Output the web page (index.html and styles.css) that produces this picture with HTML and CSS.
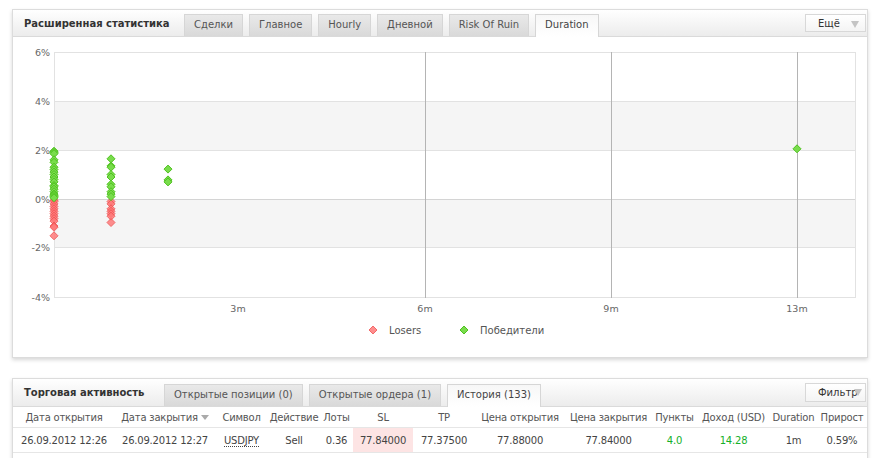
FILE: index.html
```html
<!DOCTYPE html>
<html lang="ru">
<head>
<meta charset="utf-8">
<title>Статистика</title>
<link rel="stylesheet" href="styles.css">
</head>
<body>
<section class="panel panel-stats">
  <header class="panel-head">
    <h2 class="panel-title title-stats">Расширенная статистика</h2>
    <nav class="tabs">
      <span class="tab">Сделки</span>
      <span class="tab">Главное</span>
      <span class="tab">Hourly</span>
      <span class="tab">Дневной</span>
      <span class="tab">Risk Of Ruin</span>
      <span class="tab active">Duration</span>
    </nav>
    <button class="menu-btn btn-more">Ещё<span class="tri"></span></button>
  </header>
  <svg class="chart" width="854" height="320" viewBox="13 37 854 320" xmlns="http://www.w3.org/2000/svg">
    <defs>
      <path id="dg" d="M0 -4 L4 0 L0 4 L-4 0Z" fill="#79dc4c" stroke="#4fc21f" stroke-width="1"/>
      <path id="dr" d="M0 -4 L4 0 L0 4 L-4 0Z" fill="#ff7a7a" stroke="#f05050" stroke-width="1" opacity="0.85"/>
    </defs>
    <rect x="54" y="101" width="801" height="49" fill="#f5f5f5"/>
    <rect x="54" y="199" width="801" height="48" fill="#f5f5f5"/>
    <g stroke="#e2e2e2" stroke-width="1" shape-rendering="crispEdges">
      <line x1="54" y1="52.5" x2="855" y2="52.5"/>
      <line x1="54" y1="101.5" x2="855" y2="101.5"/>
      <line x1="54" y1="150.5" x2="855" y2="150.5"/>
      <line x1="54" y1="247.5" x2="855" y2="247.5"/>
      <line x1="54" y1="297.5" x2="855" y2="297.5"/>
      <line x1="54.5" y1="52" x2="54.5" y2="298"/>
      <line x1="855.5" y1="52" x2="855.5" y2="298"/>
    </g>
    <line x1="54" y1="199.5" x2="855" y2="199.5" stroke="#d4d4d4" shape-rendering="crispEdges"/>
    <g stroke="#b4b4b4" stroke-width="1" shape-rendering="crispEdges">
      <line x1="425.5" y1="52" x2="425.5" y2="298"/>
      <line x1="611.5" y1="52" x2="611.5" y2="298"/>
      <line x1="797.5" y1="52" x2="797.5" y2="298"/>
    </g>
    <g class="axis-y" text-anchor="end">
      <text x="50" y="56">6%</text>
      <text x="50" y="105">4%</text>
      <text x="50" y="154">2%</text>
      <text x="50" y="203">0%</text>
      <text x="50" y="251">-2%</text>
      <text x="50" y="301">-4%</text>
    </g>
    <g class="axis-x" text-anchor="middle">
      <text x="238" y="312">3m</text>
      <text x="425" y="312">6m</text>
      <text x="611" y="312">9m</text>
      <text x="797" y="312">13m</text>
    </g>
    <g>
      <use href="#dr" x="54" y="200.2"/><use href="#dr" x="54" y="201.5"/><use href="#dr" x="54" y="203.9"/>
      <use href="#dr" x="54" y="206.4"/><use href="#dr" x="54" y="208.8"/><use href="#dr" x="54" y="211.3"/>
      <use href="#dr" x="54" y="213.7"/><use href="#dr" x="54" y="216.2"/><use href="#dr" x="54" y="218.6"/>
      <use href="#dr" x="54" y="221.1"/><use href="#dr" x="54" y="226"/><use href="#dr" x="54" y="227.2"/>
      <use href="#dr" x="54" y="235.8"/>
      <use href="#dr" x="111" y="201.5"/><use href="#dr" x="111" y="203.9"/><use href="#dr" x="111" y="208.8"/>
      <use href="#dr" x="111" y="211.3"/><use href="#dr" x="111" y="213.7"/><use href="#dr" x="111" y="216.2"/>
      <use href="#dr" x="111" y="222.5"/>
    </g>
    <g>
      <use href="#dg" x="54" y="151.2"/><use href="#dg" x="54" y="152.4"/><use href="#dg" x="54" y="153.7"/>
      <use href="#dg" x="54" y="159.8"/><use href="#dg" x="54" y="162.3"/><use href="#dg" x="54" y="167.2"/>
      <use href="#dg" x="54" y="169.6"/><use href="#dg" x="54" y="172.1"/><use href="#dg" x="54" y="174.5"/>
      <use href="#dg" x="54" y="177"/><use href="#dg" x="54" y="179.4"/><use href="#dg" x="54" y="181.9"/>
      <use href="#dg" x="54" y="185.5"/><use href="#dg" x="54" y="186.8"/><use href="#dg" x="54" y="189.2"/>
      <use href="#dg" x="54" y="191.7"/><use href="#dg" x="54" y="194.1"/><use href="#dg" x="54" y="195.3"/>
      <use href="#dg" x="54" y="196.6"/><use href="#dg" x="54" y="197.8"/>
      <use href="#dg" x="111" y="158.8"/><use href="#dg" x="111" y="165.9"/><use href="#dg" x="111" y="167.2"/>
      <use href="#dg" x="111" y="174.5"/><use href="#dg" x="111" y="177"/><use href="#dg" x="111" y="184.3"/>
      <use href="#dg" x="111" y="186.8"/><use href="#dg" x="111" y="191.7"/><use href="#dg" x="111" y="194.1"/>
      <use href="#dg" x="111" y="196.6"/>
      <use href="#dg" x="168" y="169.1"/><use href="#dg" x="168" y="179.9"/><use href="#dg" x="168" y="181.9"/>
      <use href="#dg" x="797" y="148.8"/>
    </g>
    <g class="legend">
      <use href="#dr" x="373" y="330"/>
      <text x="389" y="334">Losers</text>
      <use href="#dg" x="464" y="330"/>
      <text x="480" y="334">Победители</text>
    </g>
  </svg>
</section>

<section class="panel panel-trade">
  <header class="panel-head">
    <h2 class="panel-title title-trade">Торговая активность</h2>
    <nav class="tabs">
      <span class="tab">Открытые позиции (0)</span>
      <span class="tab">Открытые ордера (1)</span>
      <span class="tab active">История (133)</span>
    </nav>
    <button class="menu-btn btn-filter">Фильтр<span class="tri tri-over"></span></button>
  </header>
  <table class="trades">
    <colgroup>
      <col class="c1"><col class="c2"><col class="c3"><col class="c4"><col class="c5"><col class="c6"><col class="c7">
      <col class="c8"><col class="c9"><col class="c10"><col class="c11"><col class="c12"><col class="c13">
    </colgroup>
    <thead>
      <tr>
        <th>Дата открытия</th>
        <th>Дата закрытия <span class="sort"></span></th>
        <th>Символ</th>
        <th>Действие</th>
        <th>Лоты</th>
        <th>SL</th>
        <th>TP</th>
        <th>Цена открытия</th>
        <th>Цена закрытия</th>
        <th>Пункты</th>
        <th>Доход (USD)</th>
        <th>Duration</th>
        <th>Прирост</th>
      </tr>
    </thead>
    <tbody>
      <tr>
        <td>26.09.2012 12:26</td>
        <td>26.09.2012 12:27</td>
        <td><span class="sym">USDJPY</span></td>
        <td>Sell</td>
        <td>0.36</td>
        <td class="sl">77.84000</td>
        <td>77.37500</td>
        <td>77.88000</td>
        <td>77.84000</td>
        <td class="pos">4.0</td>
        <td class="pos">14.28</td>
        <td>1m</td>
        <td>0.59%</td>
      </tr>
      <tr class="empty"><td colspan="13"></td></tr>
    </tbody>
  </table>
</section>
</body>
</html>
```

FILE: styles.css
```css
html, body {
  margin: 0;
  padding: 0;
  background: #fff;
}
body {
  width: 878px;
  height: 458px;
  overflow: hidden;
  font-family: "DejaVu Sans", Verdana, sans-serif;
  font-size: 10px;
  color: #444;
}
.panel {
  width: 854px;
  margin-left: 12px;
  border: 1px solid #dcdcdc;
  background: #fff;
  box-shadow: 0 2px 4px rgba(0, 0, 0, 0.16);
}
.panel-stats {
  margin-top: 9px;
  height: 347px;
}
.panel-trade {
  margin-top: 20px;
  height: 120px;
}
.panel-head {
  display: flex;
  align-items: flex-end;
  height: 26px;
  background: linear-gradient(#ffffff, #ececec);
  border-bottom: 1px solid #dadada;
}
.panel-trade .panel-head {
  height: 27px;
}
.panel-title {
  margin: 0;
  align-self: center;
  box-sizing: border-box;
  padding-left: 11px;
  font-size: 10px;
  font-weight: bold;
  color: #333;
  white-space: nowrap;
}
.title-stats { width: 171px; }
.title-trade { width: 151px; }
.tabs {
  display: flex;
  align-items: flex-end;
  gap: 6px;
}
.tab {
  box-sizing: border-box;
  height: 22px;
  line-height: 20px;
  padding: 0 9px;
  border: 1px solid #d6d6d6;
  border-bottom: none;
  background: linear-gradient(#e9e9e9, #d9d9d9);
  color: #555;
  white-space: nowrap;
}
.tab.active {
  height: 23px;
  margin-bottom: -1px;
  background: linear-gradient(#f7f7f7, #ffffff);
  color: #444;
}
.menu-btn {
  position: relative;
  align-self: center;
  margin-left: auto;
  margin-right: 1px;
  box-sizing: border-box;
  width: 61px;
  border: 1px solid #d8d8d8;
  background: linear-gradient(#ffffff, #f4f4f4);
  font-family: inherit;
  font-size: 10px;
  color: #333;
  text-align: left;
  padding: 0;
}
.btn-more {
  height: 18px;
  padding-left: 12px;
}
.btn-filter {
  height: 19px;
  padding-left: 12px;
}
.tri {
  position: absolute;
  right: 6px;
  top: 6px;
  width: 0;
  height: 0;
  border-left: 4px solid transparent;
  border-right: 4px solid transparent;
  border-top: 7px solid #c4c4c4;
}
.tri-over {
  right: 3px;
  top: 5px;
}
.chart {
  display: block;
}
.axis-y text, .axis-x text {
  font-family: "DejaVu Sans", Verdana, sans-serif;
  font-size: 9.5px;
  fill: #666;
}
.legend text {
  font-family: "DejaVu Sans", Verdana, sans-serif;
  font-size: 10px;
  fill: #555;
}
.trades {
  width: 854px;
  table-layout: fixed;
  border-collapse: collapse;
  letter-spacing: -0.2px;
}
.c1 { width: 102px; }
.c2 { width: 100px; }
.c3 { width: 53px; }
.c4 { width: 52px; }
.c5 { width: 33px; }
.c6 { width: 60px; }
.c7 { width: 62px; }
.c8 { width: 90px; }
.c9 { width: 87px; }
.c10 { width: 45px; }
.c11 { width: 73px; }
.c12 { width: 47px; }
.c13 { width: 50px; }
.trades th {
  height: 20px;
  padding: 0;
  font-weight: normal;
  color: #555;
  text-align: center;
  white-space: nowrap;
  border-bottom: 1px solid #e6e6e6;
}
.trades td {
  height: 24px;
  padding: 0;
  text-align: center;
  color: #444;
  white-space: nowrap;
  border-bottom: 1px solid #e6e6e6;
}
.trades td.sl {
  background: #fde4e4;
}
.trades td.pos {
  color: #15b02a;
}
.sym {
  border-bottom: 1px dotted #444;
}
.sort {
  display: inline-block;
  width: 0;
  height: 0;
  vertical-align: middle;
  border-left: 4px solid transparent;
  border-right: 4px solid transparent;
  border-top: 5px solid #aaa;
}
.trades tr.empty td {
  height: 20px;
}
```
